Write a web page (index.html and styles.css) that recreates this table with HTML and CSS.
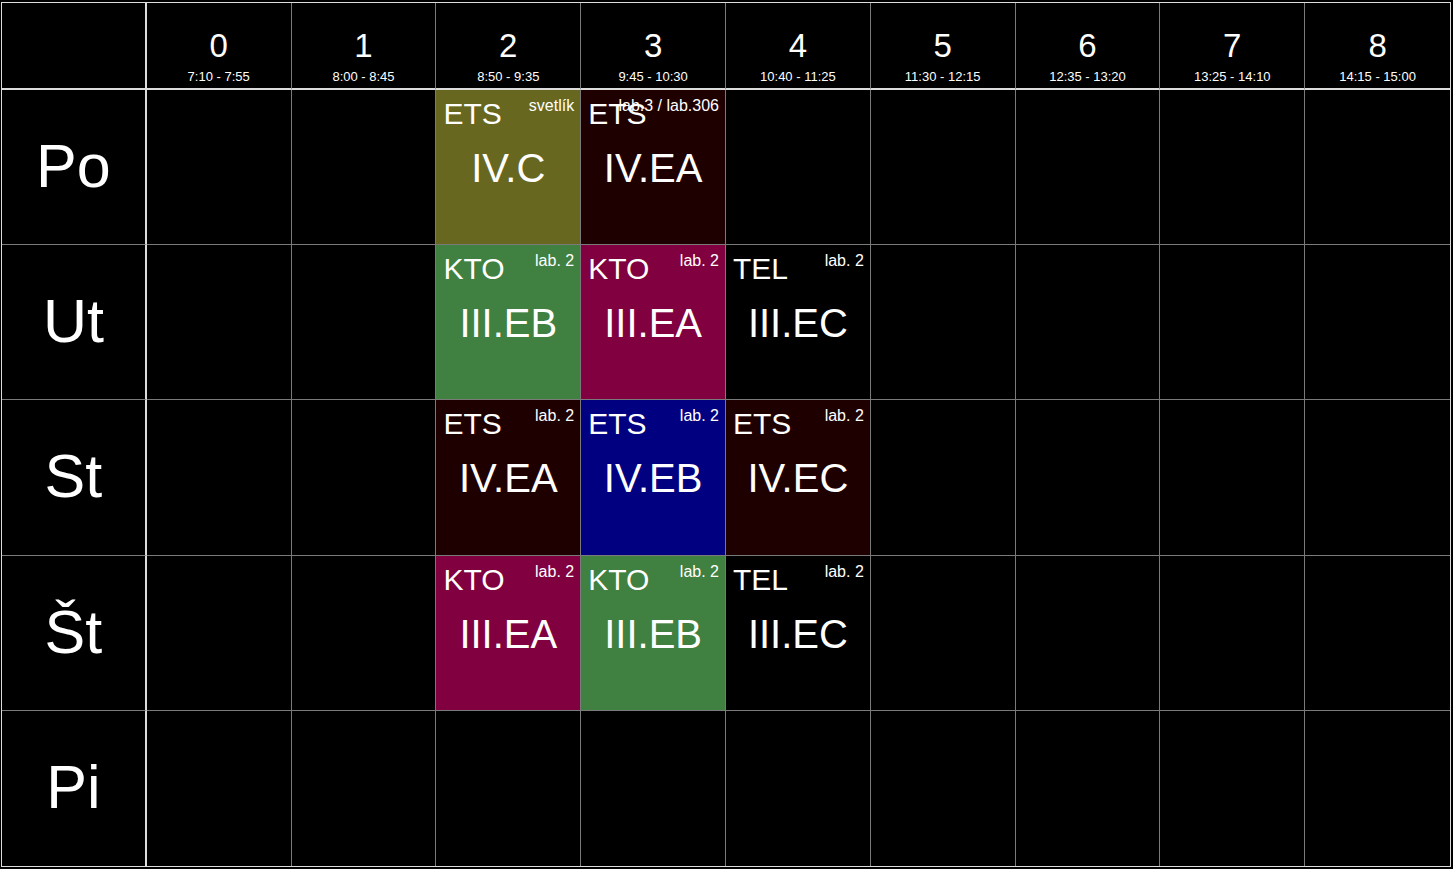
FILE: index.html
```html
<!DOCTYPE html>
<html lang="sk">
<head>
<meta charset="utf-8">
<title>Rozvrh</title>
<link rel="stylesheet" href="styles.css">
</head>
<body>
<div class="timetable">
  <div class="cell head corner"></div>
  <div class="cell head"><span class="num">0</span><span class="time">7:10 - 7:55</span></div>
  <div class="cell head"><span class="num">1</span><span class="time">8:00 - 8:45</span></div>
  <div class="cell head"><span class="num">2</span><span class="time">8:50 - 9:35</span></div>
  <div class="cell head"><span class="num">3</span><span class="time">9:45 - 10:30</span></div>
  <div class="cell head"><span class="num">4</span><span class="time">10:40 - 11:25</span></div>
  <div class="cell head"><span class="num">5</span><span class="time">11:30 - 12:15</span></div>
  <div class="cell head"><span class="num">6</span><span class="time">12:35 - 13:20</span></div>
  <div class="cell head"><span class="num">7</span><span class="time">13:25 - 14:10</span></div>
  <div class="cell head last-col"><span class="num">8</span><span class="time">14:15 - 15:00</span></div>

  <div class="cell day">Po</div>
  <div class="cell"></div>
  <div class="cell"></div>
  <div class="cell lesson olive"><span class="subj">ETS</span><span class="room">svetlík</span><span class="cls">IV.C</span></div>
  <div class="cell lesson darkred"><span class="subj">ETS</span><span class="room">lab.3 / lab.306</span><span class="cls">IV.EA</span></div>
  <div class="cell"></div>
  <div class="cell"></div>
  <div class="cell"></div>
  <div class="cell"></div>
  <div class="cell last-col"></div>

  <div class="cell day">Ut</div>
  <div class="cell"></div>
  <div class="cell"></div>
  <div class="cell lesson green"><span class="subj">KTO</span><span class="room">lab. 2</span><span class="cls">III.EB</span></div>
  <div class="cell lesson magenta"><span class="subj">KTO</span><span class="room">lab. 2</span><span class="cls">III.EA</span></div>
  <div class="cell lesson"><span class="subj">TEL</span><span class="room">lab. 2</span><span class="cls">III.EC</span></div>
  <div class="cell"></div>
  <div class="cell"></div>
  <div class="cell"></div>
  <div class="cell last-col"></div>

  <div class="cell day">St</div>
  <div class="cell"></div>
  <div class="cell"></div>
  <div class="cell lesson darkred"><span class="subj">ETS</span><span class="room">lab. 2</span><span class="cls">IV.EA</span></div>
  <div class="cell lesson navy"><span class="subj">ETS</span><span class="room">lab. 2</span><span class="cls">IV.EB</span></div>
  <div class="cell lesson darkred"><span class="subj">ETS</span><span class="room">lab. 2</span><span class="cls">IV.EC</span></div>
  <div class="cell"></div>
  <div class="cell"></div>
  <div class="cell"></div>
  <div class="cell last-col"></div>

  <div class="cell day">Št</div>
  <div class="cell"></div>
  <div class="cell"></div>
  <div class="cell lesson magenta"><span class="subj">KTO</span><span class="room">lab. 2</span><span class="cls">III.EA</span></div>
  <div class="cell lesson green"><span class="subj">KTO</span><span class="room">lab. 2</span><span class="cls">III.EB</span></div>
  <div class="cell lesson"><span class="subj">TEL</span><span class="room">lab. 2</span><span class="cls">III.EC</span></div>
  <div class="cell"></div>
  <div class="cell"></div>
  <div class="cell"></div>
  <div class="cell last-col"></div>

  <div class="cell day last-row">Pi</div>
  <div class="cell last-row"></div>
  <div class="cell last-row"></div>
  <div class="cell last-row"></div>
  <div class="cell last-row"></div>
  <div class="cell last-row"></div>
  <div class="cell last-row"></div>
  <div class="cell last-row"></div>
  <div class="cell last-row"></div>
  <div class="cell last-row last-col"></div>
</div>
</body>
</html>
```

FILE: styles.css
```css
html, body {
  margin: 0;
  padding: 0;
  background: #000;
}

body {
  font-family: "Liberation Sans", Arial, sans-serif;
  color: #fff;
}

.timetable {
  box-sizing: border-box;
  width: 1450px;
  height: 865px;
  margin: 2px 0 0 1px;
  border: 1px solid #dcdcdc;
  display: grid;
  grid-template-columns: repeat(10, 1fr);
  grid-template-rows: 87px repeat(5, 1fr);
  background: #000;
}

.cell {
  box-sizing: border-box;
  border-right: 1px solid #7a7a7a;
  border-bottom: 1px solid #7a7a7a;
  min-width: 0;
  min-height: 0;
}

.cell.last-col {
  border-right: none;
}

.cell.last-row {
  border-bottom: none;
}

.head {
  border-bottom: 2px solid #dcdcdc;
  display: flex;
  flex-direction: column;
  align-items: center;
  justify-content: flex-start;
  padding-top: 24px;
}

.head.corner,
.day {
  border-right: 2px solid #dcdcdc;
}

.num {
  font-size: 33px;
  line-height: 37px;
}

.time {
  font-size: 13px;
  line-height: 15px;
  margin-top: 5px;
}

.day {
  display: flex;
  align-items: center;
  justify-content: center;
  font-size: 61px;
  padding-bottom: 2px;
}

.lesson {
  position: relative;
  display: flex;
  align-items: center;
  justify-content: center;
}

.subj {
  position: absolute;
  left: 7px;
  top: 9px;
  font-size: 30px;
  line-height: 1;
}

.room {
  position: absolute;
  right: 6px;
  top: 8px;
  font-size: 16px;
  line-height: 1;
}

.cls {
  font-size: 40px;
  line-height: 1;
  padding-top: 2px;
}

.olive { background: #67671f; }
.darkred { background: #1e0000; }
.green { background: #408040; }
.magenta { background: #800040; }
.navy { background: #000080; }
```
